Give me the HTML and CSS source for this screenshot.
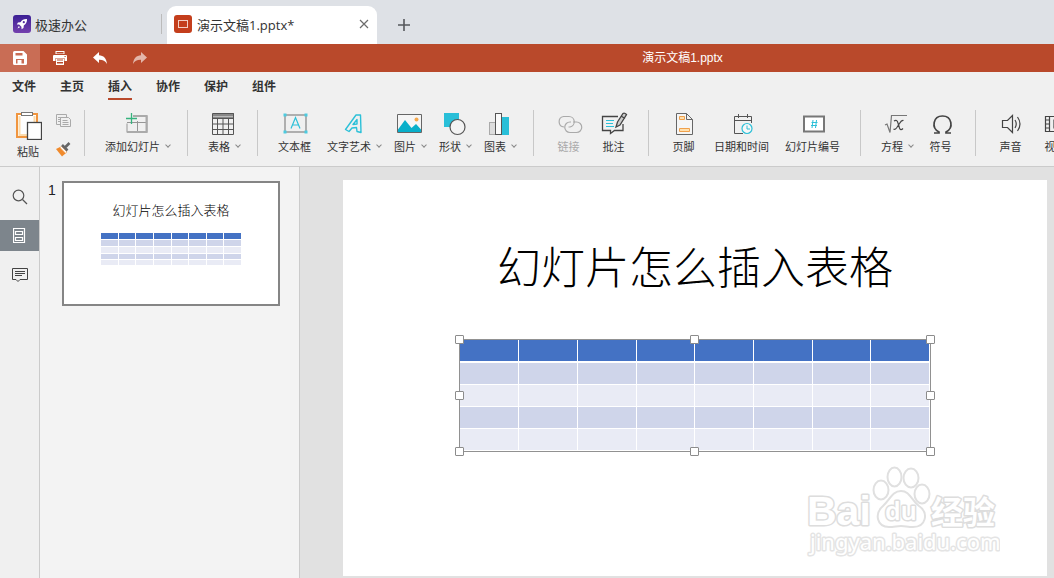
FILE: index.html
```html
<!DOCTYPE html>
<html lang="zh-CN">
<head>
<meta charset="utf-8">
<title>演示文稿1.pptx</title>
<link rel="stylesheet" href="styles.css">
</head>
<body>
<div class="app">
  <header class="tabs">
    <a class="home" href="#">
      <svg width="18" height="18" viewBox="0 0 18 18"><defs><linearGradient id="g" x1="0" y1="0" x2="0" y2="1"><stop offset="0" stop-color="#3a1f94"/><stop offset="1" stop-color="#7440ae"/></linearGradient></defs><rect width="18" height="18" rx="3" fill="url(#g)"/><path d="M14 4c-3-.2-5 1-6.500 3.200L5 7.500 3.800 9.400l2.400.2 2.200 2.200.2 2.400L10.500 13l.3-2.500C13 9 14.200 7 14 4z" fill="#fff"/><path d="M5.800 11l-1.300 2.500L7 12.200z" fill="#fff"/><circle cx="10.800" cy="7.200" r="1.100" fill="#5630a0"/></svg>
      <span>极速办公</span>
    </a>
    <div class="tab">
      <svg width="18" height="18" viewBox="0 0 18 18"><rect width="18" height="18" rx="3" fill="#c43e1c"/><rect x="4.500" y="5.500" width="9" height="7" fill="none" stroke="#f3cfc4"/></svg>
      <span class="name">演示文稿1.pptx*</span>
      <button class="plain" aria-label="关闭"><svg width="10" height="10" viewBox="0 0 10 10"><path d="M1 1l8 8M9 1L1 9" stroke="#6c6c6c" stroke-width="1.200"/></svg></button>
    </div>
    <button class="plain add" aria-label="新建"><svg width="12" height="12" viewBox="0 0 12 12"><path d="M6 0v12M0 6h12" stroke="#55585c" stroke-width="1.600"/></svg></button>
  </header>

  <div class="titlebar">
    <div class="quick">
      <button class="on" aria-label="保存"><svg width="14" height="14" viewBox="0 0 14 14"><path fill="#fff" fill-rule="evenodd" d="M1.500 0h9L14 3.500v9q0 1.500-1.500 1.500h-11Q0 14 0 12.500v-11Q0 0 1.500 0zM2.500 2v2.500h7V2zM3 8v4.500h1.500V9h4v3.500H11V8z"/></svg></button>
      <button aria-label="打印"><svg width="14" height="14" viewBox="0 0 14 14"><path fill="#fff" fill-rule="evenodd" d="M2.500 0h9v3h-9zM3.500 1v1.500h7V1zM1 4h12q1 0 1 1v5h-2.500V7h-9v3H0V5q0-1 1-1zM3 7.500h8V14H3zM4 8.500h6v1H4zM4 11h6v1.500H4z"/><path fill="#b9492b" d="M11.500 5h1.200v1h-1.200z"/></svg></button>
      <button aria-label="撤销"><svg width="14" height="12" viewBox="0 0 14 12"><path fill="#fff" d="M6 0v3.200c4.500.2 7.500 3 8 8.800-1.800-3.200-4-4.300-8-4.200V11L0 5.500z"/></svg></button>
      <button class="dim" aria-label="恢复"><svg width="14" height="12" viewBox="0 0 14 12"><path fill="#fff" d="M8 0v3.200C3.500 3.400.500 6.200 0 12c1.800-3.200 4-4.300 8-4.200V11l6-5.500z"/></svg></button>
    </div>
    <div class="doc">演示文稿1.pptx</div>
  </div>

  <nav class="menu">
    <a href="#">文件</a><a href="#">主页</a><a href="#" class="current">插入</a><a href="#">协作</a><a href="#">保护</a><a href="#">组件</a>
  </nav>

  <div class="ribbon">
    <div class="group clip">
      <button class="paste">
        <svg width="28" height="30" viewBox="0 0 28 30"><rect x="3" y="4" width="20" height="23" fill="#fff" stroke="#f0953f" stroke-width="2"/><path d="M5.500 6v19H14M20.500 6v6" fill="none" stroke="#fbdcae" stroke-width="2"/><rect x="7.500" y="2.500" width="11" height="3" fill="#fff" stroke="#777"/><rect x="13.500" y="12.500" width="14" height="17" fill="#fff" stroke="#444" stroke-width="1.300"/></svg>
        <span>粘贴</span>
      </button>
      <div class="pair">
        <button aria-label="复制"><svg width="16" height="16" viewBox="0 0 16 16"><g fill="#f0f0f0" stroke="#aaa"><path d="M.5 1.500h10v10H.5zM2 4.500h5M2 6.500h5M2 8.500h5"/><path d="M4.500 4.500h8l2 2v7h-10zM6.500 7.500h5M6.500 9.500h6M6.500 11.500h6"/></g></svg></button>
        <button aria-label="格式刷"><svg width="16" height="16" viewBox="0 0 16 16"><path d="M0 8l4-2 6 6-4 3.500z" fill="#f08a2c"/><path d="M5.500 5.500l5.500 5.500-1.500 1.200L4 6.500z" fill="#fff" stroke="#f3a45c" stroke-width=".7"/><path d="M6 4l5.500 5.500M9 6.500L13.500 2" stroke="#666" stroke-width="2.600"/></svg></button>
      </div>
    </div>
    <div class="group">
      <button class="tool drop"><svg width="28" height="26" viewBox="0 0 28 26"><path d="M12 3.500h13v17H5v-9M5 10.500h20M15.500 9v11" fill="none" stroke="#969696"/><path d="M11 4h14M5 20h20M24.500 3v18" stroke="#aaa" stroke-width="2"/><path d="M9.500 1v11M4 6.500h11" stroke="#36b37e" stroke-width="1.300"/></svg><span>添加幻灯片<i></i></span></button>
    </div>
    <div class="group">
      <button class="tool drop"><svg width="28" height="26" viewBox="0 0 28 26"><path d="M4 1h21v5H4z" fill="#888"/><path d="M4 4.500h20" stroke="#bbb"/><path d="M3.500 1.500h21v21h-21zM3.500 6.500h21M3.500 12h21M3.500 17.500h21M8.500 6v16M14 6v16M19.500 6v16" fill="none" stroke="#555"/></svg><span>表格<i></i></span></button>
    </div>
    <div class="group">
      <button class="tool"><svg width="28" height="26" viewBox="0 0 28 26"><rect x="4" y="3" width="21" height="17" fill="none" stroke="#999" stroke-width="1.500"/><g fill="#4ccbe0"><path d="M2.500 1.500h3v3h-3zM23.500 1.500h3v3h-3zM2.500 18.500h3v3h-3zM23.500 18.500h3v3h-3z"/></g><path d="M10 16.500l4.500-11 4.500 11M11.500 13h6" fill="none" stroke="#2cc0d8" stroke-width="1.200"/></svg><span>文本框</span></button>
      <button class="tool drop"><svg width="28" height="26" viewBox="0 0 28 26"><path d="M6.500 17.500L17 3h4.500l.5 17.500-4-1-.5-4-4.500.5-3 3.500zM14 12.500l4-.5V7.500z" fill="none" stroke="#2cc0d8" stroke-width="1.400" stroke-linejoin="round"/></svg><span>文字艺术<i></i></span></button>
      <button class="tool drop"><svg width="28" height="26" viewBox="0 0 28 26"><path d="M2.500 2.500h24v18h-24z" fill="#f5f5f5" stroke="#666"/><path d="M3 17.500L10 8l6.500 8 4.500-4 5 5.500V20H3z" fill="#08afca"/><circle cx="21.500" cy="7.500" r="2" fill="#f5a84c"/></svg><span>图片<i></i></span></button>
      <button class="tool drop"><svg width="28" height="26" viewBox="0 0 28 26"><path d="M4 1h15v14H4z" fill="#29bfd8"/><circle cx="17.500" cy="15" r="7.500" fill="#f3f3f3" stroke="#555" stroke-width="1.200"/></svg><span>形状<i></i></span></button>
      <button class="tool drop"><svg width="28" height="26" viewBox="0 0 28 26"><rect x="4.500" y="10.500" width="7" height="12" fill="#ddd" stroke="#aaa"/><path d="M17 5h7v18h-7z" fill="#29bfd8"/><rect x="10.500" y="1.500" width="6" height="21" fill="#fafafa" stroke="#555"/></svg><span>图表<i></i></span></button>
    </div>
    <div class="group">
      <button class="tool" disabled><svg width="28" height="26" viewBox="0 0 28 26"><g fill="none" stroke="#aaa" stroke-width="1.200"><path d="M9 15A5.300 5.300 0 0 1 8.500 4.500H14A5.300 5.300 0 0 1 15 15h-1.500"/><path d="M18 10h3.500a5.200 5.200 0 0 1 0 10.500H15A5.200 5.200 0 0 1 15 10h1"/></g></svg><span>链接</span></button>
      <button class="tool"><svg width="28" height="26" viewBox="0 0 28 26"><path d="M18 4.500H2.500v14h8v3l4-3h8.500V12" fill="none" stroke="#444" stroke-width="1.300"/><path d="M6 8.500h8M6 11.500h7M6 14.500h8" stroke="#2cc0d8"/><path d="M16 15l1.500-5L23 1.500q1.500-1 3.500 1L20 13zM21 4l4 2.500" fill="#ccc" stroke="#444" stroke-width="1.300"/></svg><span>批注</span></button>
    </div>
    <div class="group">
      <button class="tool"><svg width="28" height="26" viewBox="0 0 28 26"><path d="M6.500 1.500h10l6 6v15h-16zM16.500 1.500v6h6" fill="#f5f5f5" stroke="#666"/><path d="M9.500 4.500h5v3h-5zM9.500 16.500h10v3h-10z" fill="#ffe0ae" stroke="#f0a04b"/></svg><span>页脚</span></button>
      <button class="tool"><svg width="28" height="26" viewBox="0 0 28 26"><path d="M23.500 11V4.500h-17v17H15M6.500 8.500h17M10.500 2v4M19.500 2v4" fill="none" stroke="#555"/><circle cx="19" cy="16.500" r="5" fill="#f7f7f7" stroke="#2cc0d8" stroke-width="1.200"/><path d="M19 13.500v3.500h3" fill="none" stroke="#2cc0d8"/></svg><span>日期和时间</span></button>
      <button class="tool"><svg width="28" height="26" viewBox="0 0 28 26"><rect x="5" y="4.500" width="20" height="15" fill="#fff" stroke="#777" stroke-width="2"/><path d="M14 8l-1 8M17.500 8l-1 8M12.500 10.500h6M12 13.500h6" stroke="#2cc0d8"/></svg><span>幻灯片编号</span></button>
    </div>
    <div class="group">
      <button class="tool drop"><svg width="28" height="26" viewBox="0 0 28 26"><path d="M3 13l2-1 3 8.500L9.500 3.500H25" fill="none" stroke="#777" stroke-width="1.200"/><path d="M12 9q3-2 4 2l1.500 5q1 3 3.500.5M21.500 8.500q-2-.5-4 3l-3 4.500q-1.500 2-3 1" fill="none" stroke="#444" stroke-width="1.200"/></svg><span>方程<i></i></span></button>
      <button class="tool"><svg width="28" height="26" viewBox="0 0 28 26"><path d="M7 21h5v-1C4 16 6 4 15.500 4S27 16 19 20v1h5" fill="none" stroke="#444" stroke-width="1.700"/></svg><span>符号</span></button>
    </div>
    <div class="group last">
      <button class="tool"><svg width="28" height="26" viewBox="0 0 28 26"><path d="M5.500 8.500h5l5-5v17l-5-5h-5zM18 8q2.500 4 0 8M20.500 5q5 7 0 14" fill="none" stroke="#444" stroke-width="1.200"/></svg><span>声音</span></button>
      <button class="tool"><svg width="28" height="26" viewBox="0 0 28 26"><path d="M3.500 4.500h21v15h-21zM7.500 4v16M20.500 4v16M3.500 8h4M3.500 12h4M3.500 16h4M20 8h4M20 12h4M20 16h4M12 8.500v7l5-3.500z" fill="none" stroke="#444" stroke-width="1.200"/></svg><span>视频</span></button>
    </div>
  </div>

  <main class="work">
    <aside class="rail">
      <button aria-label="查找"><svg width="16" height="16" viewBox="0 0 16 16"><circle cx="6.500" cy="6.500" r="5.300" fill="none" stroke="#555" stroke-width="1.200"/><path d="M10.500 10.500l4.500 4.500" stroke="#555" stroke-width="1.300"/></svg></button>
      <button class="on" aria-label="幻灯片"><svg width="13" height="15" viewBox="0 0 13 15"><path d="M.5.500h11v14H.5zM2.500 3.500h7v3h-7zM2.500 9.500h7v3h-7z" fill="none" stroke="#fff" stroke-width="1.200"/></svg></button>
      <button aria-label="批注"><svg width="16" height="16" viewBox="0 0 16 16"><path d="M.5 1.500h15v11H8l-2 2-2-2H.5zM3 4.500h10M3 6.500h10M3 8.500h7" fill="none" stroke="#444"/></svg></button>
    </aside>
    <aside class="slides">
      <span class="num">1</span>
      <div class="thumb">
        <div class="thumb-title">幻灯片怎么插入表格</div>
        <table class="mini">
          <tr><td></td><td></td><td></td><td></td><td></td><td></td><td></td><td></td></tr>
          <tr><td></td><td></td><td></td><td></td><td></td><td></td><td></td><td></td></tr>
          <tr><td></td><td></td><td></td><td></td><td></td><td></td><td></td><td></td></tr>
          <tr><td></td><td></td><td></td><td></td><td></td><td></td><td></td><td></td></tr>
          <tr><td></td><td></td><td></td><td></td><td></td><td></td><td></td><td></td></tr>
        </table>
      </div>
    </aside>
    <section class="canvas">
      <div class="slide">
        <h1>幻灯片怎么插入表格</h1>
        <div class="selection">
          <table class="grid">
            <tr><td></td><td></td><td></td><td></td><td></td><td></td><td></td><td></td></tr>
            <tr><td></td><td></td><td></td><td></td><td></td><td></td><td></td><td></td></tr>
            <tr><td></td><td></td><td></td><td></td><td></td><td></td><td></td><td></td></tr>
            <tr><td></td><td></td><td></td><td></td><td></td><td></td><td></td><td></td></tr>
            <tr><td></td><td></td><td></td><td></td><td></td><td></td><td></td><td></td></tr>
          </table>
          <b class="h t l"></b><b class="h t c"></b><b class="h t r"></b>
          <b class="h m l"></b><b class="h m r"></b>
          <b class="h d l"></b><b class="h d c"></b><b class="h d r"></b>
        </div>
        <svg class="mark" width="200" height="96" viewBox="0 0 200 96">
          <g class="paw"><ellipse cx="81" cy="25" rx="7.500" ry="9.500"/><ellipse cx="94.500" cy="12" rx="7" ry="9.500"/><ellipse cx="111" cy="13" rx="7.500" ry="9.500"/><ellipse cx="122" cy="29" rx="7.500" ry="9.500"/><path d="M101 26c-9 0-11 9-18 15-9 8-6 21 6 21 5 0 8-1 12-1s7 1 12 1c13 0 16-14 6-21-8-6-9-15-18-15z"/></g>
          <g class="word"><text x="7" y="60" font-size="41" class="heavy">Bai</text><text x="85" y="55" font-size="25" class="du">du</text><text x="131" y="59" font-size="32" class="heavy cjk">经验</text><text x="10" y="85" font-size="22" class="url">jingyan.baidu.com</text></g>
        </svg>
      </div>
    </section>
  </main>
</div>
</body>
</html>
```
FILE: styles.css
```css
* { box-sizing: border-box; }
body { margin: 0; font-family: "Noto Sans CJK SC", sans-serif; color: #333; background: #e1e1e1; }
button { border: 0; padding: 0; margin: 0; background: none; font: inherit; color: inherit; display: flex; align-items: center; justify-content: center; }
a { color: inherit; text-decoration: none; }
svg { display: block; flex: none; }
.app { height: 100vh; display: flex; flex-direction: column; overflow: hidden; }

.tabs { display: flex; height: 44px; padding-top: 6px; background: #dee1e6; font-size: 13px; flex: none; }
.home { display: flex; align-items: center; gap: 4px; width: 162px; margin-right: 5px; padding: 0 0 2px 13px; background: linear-gradient(#bbb, #bbb) right 8px / 1px 20px no-repeat; }
.tab { display: flex; align-items: center; gap: 5px; width: 210px; padding: 0 8px 2px 7px; background: #fff; border-radius: 9px 9px 0 0; }
.name { flex: 1; font-family: "Open Sans", "Noto Sans CJK SC", sans-serif; }
.add { margin-left: 21px; }

.titlebar { display: flex; height: 28px; background: #b9492b; color: #fff; flex: none; }
.quick { display: flex; width: 311px; }
.quick button { width: 40px; height: 28px; }
.quick .on { background: #c96d55; }
.quick .dim svg { opacity: .6; }
.doc { flex: 1; text-align: center; font: 12px/28px "Liberation Sans", "Noto Sans CJK SC", sans-serif; }

.menu { display: flex; gap: 24px; height: 28px; padding-left: 12px; background: #f0f0f0; font-size: 12px; font-weight: 700; line-height: 27px; flex: none; }
.menu a { height: 28px; }
.menu .current { border-bottom: 2px solid #b9492b; }

.ribbon { display: flex; height: 67px; background: #f0f0f0; border-bottom: 1px solid #cbcbcb; flex: none; overflow: hidden; font-size: 11px; line-height: 16px; }
.group { display: flex; flex: none; padding: 10px 13px 0 12px; background: linear-gradient(#c8c8c8, #c8c8c8) right 10px / 1px 46px no-repeat; }
.group.last { background: none; }
.tool { flex-direction: column; justify-content: flex-start; min-width: 45px; height: 52px; padding: 2px 8px 0; white-space: nowrap; }
.tool.drop { padding-right: 4px; }
.tool.drop svg { margin-right: 4px; }
.tool span { display: flex; align-items: center; }
.tool i { width: 4px; height: 4px; margin: 0 1px 2px 6px; border: solid #888; border-width: 0 1px 1px 0; transform: rotate(45deg); }
.tool:disabled { color: #aaa; }
.clip { width: 85px; gap: 14px; padding: 10px 0 0 14px; }
.paste { flex-direction: column; justify-content: flex-start; gap: 3px; }
.pair { display: flex; flex-direction: column; gap: 12px; padding-top: 3px; }

.work { display: flex; flex: 1; min-height: 0; }
.rail { width: 40px; padding-top: 14px; background: #f0f0f0; border-right: 1px solid #cbcbcb; display: flex; flex-direction: column; gap: 8px; flex: none; }
.rail button { height: 31px; width: 100%; }
.rail .on { background: #7d858c; }
.slides { display: flex; align-items: flex-start; gap: 6px; width: 260px; padding: 14px 19px 0 8px; background: #f3f3f3; border-right: 1px solid #cbcbcb; flex: none; }
.num { width: 8px; color: #222; font: 14px/18px "Liberation Sans", sans-serif; }
.thumb { flex: 1; height: 125px; border: 2px solid #858585; background: #fff; padding-top: 17px; }
.thumb-title { text-align: center; font-size: 13px; line-height: 20px; font-weight: 300; color: #000; }
.mini { width: 142px; margin: 12px auto 0; border-collapse: collapse; table-layout: fixed; }
.mini td { height: 6px; padding: 0; border: 1px solid #fff; }
.mini tr:nth-child(-n+3) td { height: 7px; }
.canvas { flex: 1; min-width: 0; padding: 13px 7px 0 43px; }
.slide { position: relative; aspect-ratio: 16 / 9; background: #fff; padding-top: 53px; }
h1 { margin: 0; text-align: center; font-size: 44px; line-height: 64px; font-weight: 300; color: #000; }
.selection { position: relative; width: 67%; margin: 42px auto 0; border: 1px solid #919191; }
.grid { width: 100%; border-collapse: collapse; table-layout: fixed; }
.grid td { height: 22px; padding: 0; border: solid #fff; border-width: 0 1px 1px 0; }
tr:nth-child(odd) td { background: #e9ebf5; }
tr:nth-child(even) td { background: #cfd5ea; }
tr:first-child td { background: #4472c4; }
.grid tr:first-child td { border-bottom-width: 2px; }
.h { position: absolute; width: 9px; height: 9px; background: #fff; border: 1px solid #8c8c8c; border-radius: 1px; }
.t { top: -5px; }
.m { top: calc(50% - 4px); }
.d { bottom: -5px; }
.l { left: -5px; }
.c { left: calc(50% - 5px); }
.r { right: -5px; }
.mark { position: absolute; right: 47px; bottom: 15px; }
.paw { fill: #fff; stroke: #e0e0e0; stroke-width: 2; }
.word { fill: #fff; stroke: #ddd; stroke-width: 3; stroke-linejoin: round; paint-order: stroke; }
.heavy { font-family: "Liberation Sans", sans-serif; font-weight: 700; }
.heavy.cjk { font-family: "Noto Sans CJK SC", sans-serif; }
.du { font-family: "Noto Sans", sans-serif; font-weight: 600; }
.url { font-family: "Noto Sans", sans-serif; stroke: #e4e4e4; }
```
